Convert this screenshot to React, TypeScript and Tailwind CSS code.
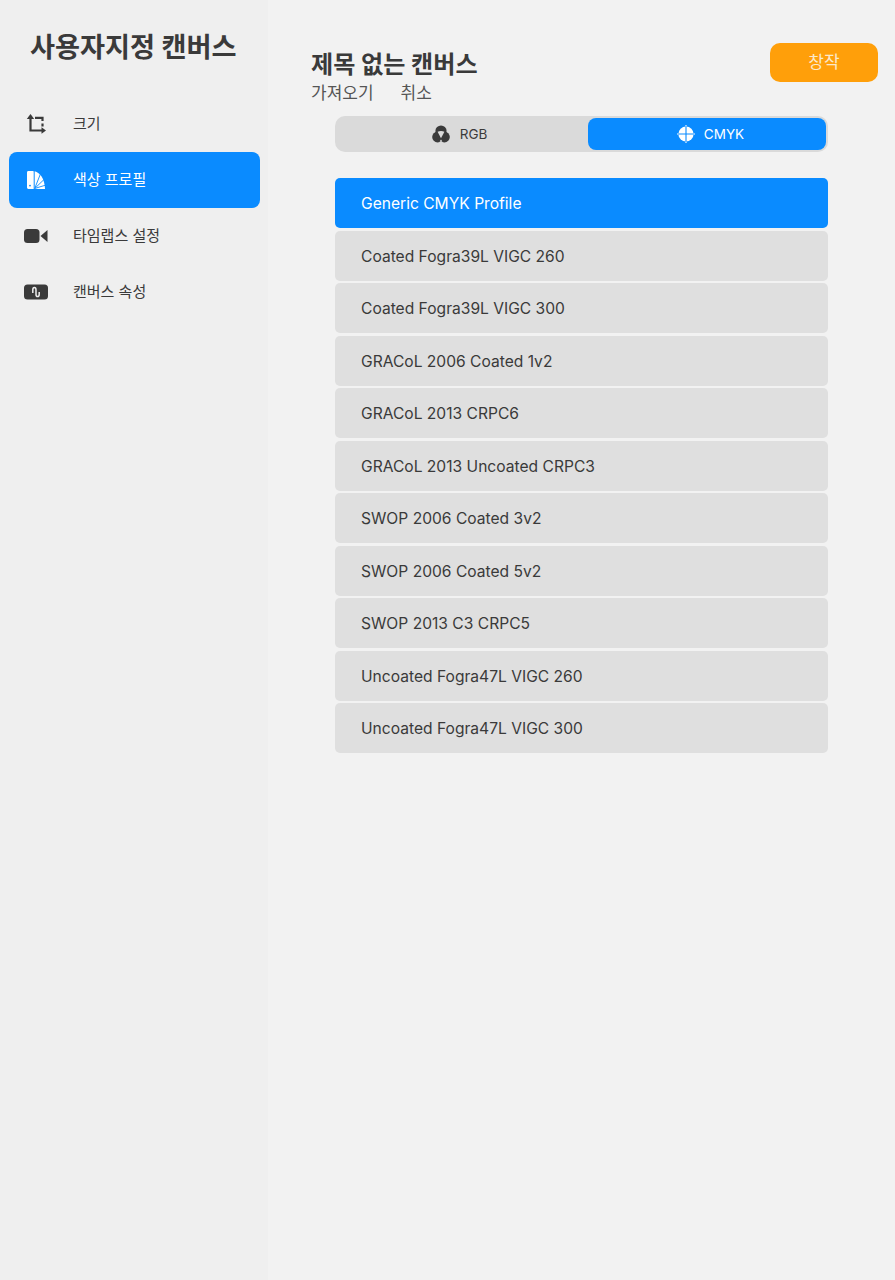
const font = "[font-family:Inter,'Noto_Sans_CJK_KR',sans-serif]";

function CropIcon() {
  return (
    <svg width="20" height="20" viewBox="0 0 20 20" fill="none" stroke="#3a3a3a" strokeWidth="2.2">
      <path d="M4.5 3V16.5H17" />
      <path d="M4.5 0L0.8 5H8.2Z" fill="#3a3a3a" stroke="none" />
      <path d="M20 16.5L15.5 13.2V19.8Z" fill="#3a3a3a" stroke="none" />
      <path d="M9 3.8H16.5V7" />
      <path d="M16.5 9.5V12.5" />
    </svg>
  );
}
function FanIcon() {
  return (
    <svg width="20" height="20" viewBox="0 0 20 20" fill="#fff">
      <path d="M1 2.4C1 1.6 1.6 1 2.4 1H7C7.4 1 7.7 1.2 7.7 1.6V19H2.4C1.6 19 1 18.4 1 17.6Z" />
      <path d="M8.7 1.2C14 2.4 18.8 9 19 19H8.7Z" />
      <path d="M8.7 18.5L14.6 3.5M8.7 18.5L18 9.5M8.7 18.5L20 15" stroke="#0a8bff" strokeWidth="0.9" fill="none" />
      <circle cx="4" cy="15.6" r="0.9" fill="#0a8bff" />
    </svg>
  );
}
function VideoIcon() {
  return (
    <svg width="24" height="14" viewBox="0 0 24 14" fill="#3a3a3a">
      <rect x="0" y="0" width="15.5" height="14" rx="3.5" />
      <path d="M16.5 7L23.5 1V13Z" />
    </svg>
  );
}
function WaveIcon() {
  return (
    <svg width="24" height="16" viewBox="0 0 24 16">
      <rect x="0" y="0.5" width="24" height="15" rx="3.5" fill="#3a3a3a" />
      <path d="M8.8 9V5.8C8.8 2.6 12 2.6 12 5.8V10.2C12 13.4 15.2 13.4 15.2 10.2V8" fill="none" stroke="#efefef" strokeWidth="1.5" />
    </svg>
  );
}
function RgbIcon() {
  return (
    <svg width="18" height="18" viewBox="0 0 18 18" fill="#3a3a3a">
      <circle cx="9" cy="6" r="5.6" />
      <circle cx="5.6" cy="12" r="5.4" />
      <circle cx="12.4" cy="12" r="5.4" />
      <path d="M5.6 6.8C7.6 5.6 10.4 5.6 12.4 6.8L9 13.2Z" fill="#dadada" />
      <path d="M9 14.6L10.4 16.6H7.6Z" fill="#dadada" />
    </svg>
  );
}
function CmykIcon() {
  return (
    <svg width="18" height="18" viewBox="0 0 18 18">
      <circle cx="9" cy="9" r="7.6" fill="#fff" />
      <path d="M9 1V17M1 9H17" stroke="#0a8bff" strokeWidth="1.1" />
      <path d="M9 0V1.5M9 16.5V18M0 9H1.5M16.5 9H18" stroke="#fff" strokeWidth="1.1" />
    </svg>
  );
}

const nav = [
  { label: "크기", icon: <CropIcon /> },
  { label: "색상 프로필", icon: <FanIcon />, active: true },
  { label: "타임랩스 설정", icon: <VideoIcon /> },
  { label: "캔버스 속성", icon: <WaveIcon /> },
];

const profiles = [
  "Generic CMYK Profile",
  "Coated Fogra39L VIGC 260",
  "Coated Fogra39L VIGC 300",
  "GRACoL 2006 Coated 1v2",
  "GRACoL 2013 CRPC6",
  "GRACoL 2013 Uncoated CRPC3",
  "SWOP 2006 Coated 3v2",
  "SWOP 2006 Coated 5v2",
  "SWOP 2013 C3 CRPC5",
  "Uncoated Fogra47L VIGC 260",
  "Uncoated Fogra47L VIGC 300",
];

export default function App() {
  return (
    <div className={`flex h-[1280px] w-[895px] overflow-hidden bg-[#f2f2f2] text-[#3a3a3a] ${font}`}>
      <aside className="flex h-full w-[268px] shrink-0 flex-col bg-[#efefef] pl-[9px] pr-[8px]">
        <h1 className="mt-[30px] h-[36px] pl-[21px] text-[27.2px] font-bold leading-[36px] whitespace-nowrap">사용자지정 캔버스</h1>
        <nav className="mt-[30px] flex flex-col">
          {nav.map((n) => (
            <div
              key={n.label}
              className={`flex h-[56px] items-center rounded-[8px] text-[15px] ${n.active ? "bg-[#0a8bff] text-white" : ""}`}
            >
              <span className="flex w-[64px] shrink-0 justify-center pl-[1px] pr-[12px]">{n.icon}</span>
              <span className="pt-[1px]">{n.label}</span>
            </div>
          ))}
        </nav>
      </aside>
      <main className="min-w-0 flex-1 pl-[43px] pr-[17px]">
        <header className="flex items-start justify-between pt-[43px]">
          <div>
            <h2 className="h-[40px] text-[24.1px] font-bold leading-[44px] whitespace-nowrap">제목 없는 캔버스</h2>
            <div className="flex h-[20px] gap-[27px] text-[17px] leading-[21px] text-[#555555]">
              <span>가져오기</span>
              <span>취소</span>
            </div>
          </div>
          <button className="h-[39px] w-[108px] rounded-[10px] bg-[#ff9f0a] text-[17px] text-[#fbe9cc]">창작</button>
        </header>
        <div className="ml-[24px] mr-[50px] mt-[13px] flex h-[36px] items-center rounded-[10px] bg-[#dadada] p-[2px] text-[13.5px]">
          <div className="flex h-[32px] flex-1 items-center justify-center gap-[10px] pr-[6px]">
            <RgbIcon />
            <span>RGB</span>
          </div>
          <div className="flex h-[32px] w-[238px] items-center justify-center gap-[9px] rounded-[8px] bg-[#0a8bff] pl-[7px] text-white">
            <CmykIcon />
            <span>CMYK</span>
          </div>
        </div>
        <ul className="ml-[24px] mr-[50px] mt-[26px] flex flex-col gap-[2.5px]">
          {profiles.map((p, i) => (
            <li
              key={p}
              className={`flex h-[50px] items-center rounded-[5px] pl-[26px] pt-[2px] text-[15.6px] ${i === 0 ? "bg-[#0a8bff] text-white" : "bg-[#dfdfdf]"}`}
            >
              {p}
            </li>
          ))}
        </ul>
      </main>
    </div>
  );
}
